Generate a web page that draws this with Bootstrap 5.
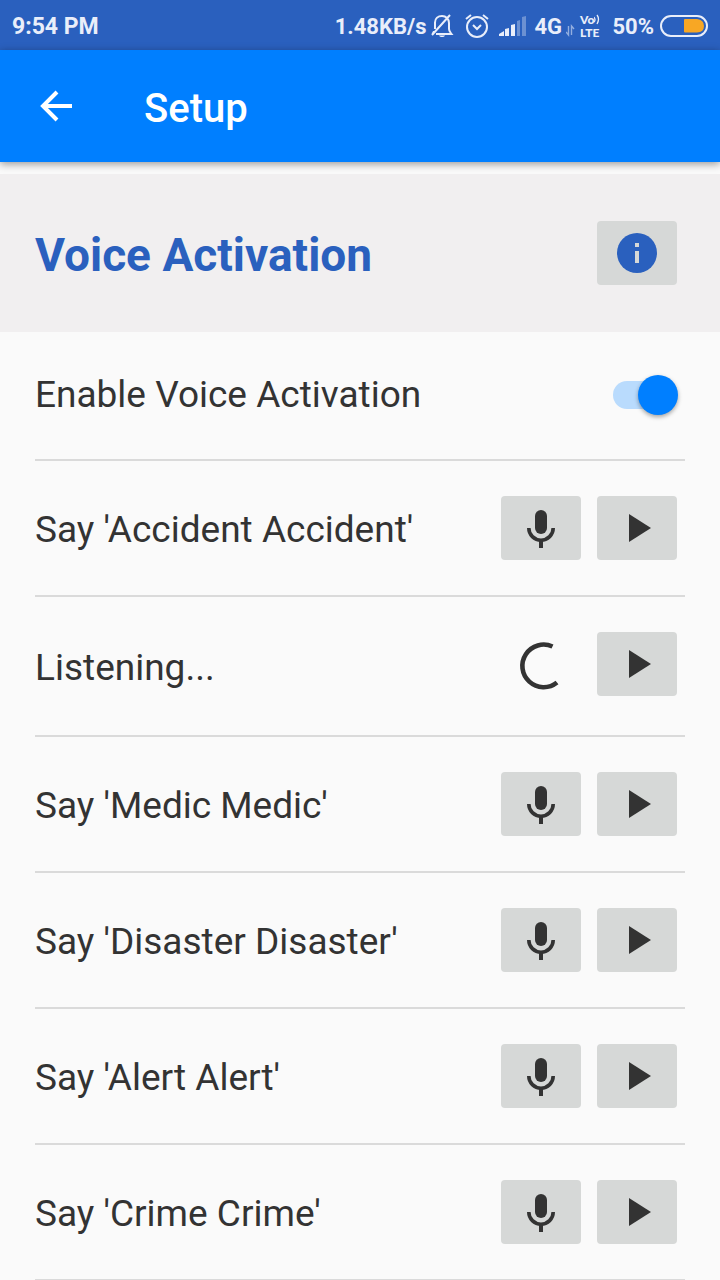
<!DOCTYPE html>
<html lang="en">
<head>
<meta charset="utf-8">
<meta name="viewport" content="width=device-width, initial-scale=1">
<title>Setup</title>
<link href="https://cdn.jsdelivr.net/npm/bootstrap@5.3.0/dist/css/bootstrap.min.css" rel="stylesheet">
<style>
  body { font-family: Roboto, "Liberation Sans", sans-serif; background: #fafafa; color: #333; }
  svg { display: block; flex: none; }
  .screen-body { scrollbar-width: none; }

  /* system status bar */
  .status-bar { height: 50px; padding: 2px 12px 0; background: #2a60be; color: #e9eefa; font-size: 22px; font-weight: 700; line-height: 28px; }
  .status-bar > span { padding-top: 2px; }
  .clock { font-size: 23px; }
  .status-bar > .volte { padding-top: 0; font-family: Lato, sans-serif; font-size: 12px; font-weight: 900; line-height: 13px; }
  .alarm { margin-left: 10px; }
  .battery { margin-left: 6px; }

  /* title bar */
  .app-bar { height: 112px; padding: 0 32px; background: #007fff; color: #fff; box-shadow: 0 2px 8px rgba(0, 0, 0, .4); z-index: 1; }
  .app-bar h1 { margin: 6px 0 0 64px; font-size: 40px; font-weight: 500; line-height: 48px; }

  .section-head { margin-top: 12px; padding: 47px 43px 47px 35px; background: #f1eff0; }
  .section-head h2 { padding-top: 4px; font-size: 46px; font-weight: 700; line-height: 56px; color: #2a60be; }

  .options { padding: 0 35px; }
  .option { min-height: 136px; padding: 0 8px 0 0; border-bottom: 2px solid #dadada; font-size: 37px; line-height: 48px; }
  .option > span:first-child { padding-top: 3px; }
  .option-switch { min-height: 129px; padding: 0 7px 2px 0; }
  .option-busy { min-height: 140px; }

  .key { width: 80px; height: 64px; border-radius: 4px; background: #d6d8d7; color: #333; }
  .key:hover, .key:active { background: #c9cbca !important; }

  /* toggle */
  .toggle { width: 65px; height: 40px; }
  .toggle input { appearance: none; width: 100%; height: 100%; margin: 0; cursor: pointer; display: flex; align-items: center; }
  .toggle input::before { content: ""; width: 56px; height: 28px; border-radius: 14px; background: #b9dbfd; }
  .toggle input::after { content: ""; width: 40px; height: 40px; margin-left: -31px; border-radius: 50%; background: #007fff; box-shadow: 0 2px 4px rgba(0, 0, 0, .35); }
  .toggle input:not(:checked)::before { background: #c4c4c4; }
  .toggle input:not(:checked)::after { margin-left: -56px; background: #f1f1f1; }
</style>
</head>
<body>
<svg width="0" height="0" class="position-absolute" aria-hidden="true">
  <symbol id="mic" viewBox="0 0 48 48">
    <rect x="18" y="6" width="12" height="24" rx="6" fill="currentColor"/>
    <path d="M11.800 24a12.200 12.200 0 0 0 24.400 0" fill="none" stroke="currentColor" stroke-width="3.600"/>
    <path d="M24 36v8" stroke="currentColor" stroke-width="4"/>
  </symbol>
  <symbol id="play" viewBox="0 0 48 48"><path d="M16 10v28l22-14z" fill="currentColor"/></symbol>
</svg>

<div class="vh-100 d-flex flex-column overflow-hidden">
  <div class="status-bar d-flex flex-shrink-0 align-items-center">
    <span class="clock me-auto">9:54 PM</span>
    <span class="me-1">1.48KB/s</span>
    <svg width="24" height="26" viewBox="0 0 24 26" fill="none" stroke="#e9eefa" stroke-width="2" aria-label="Muted">
      <path d="M5 16V9.500C5 5.500 8 3 12 3s7 3 7 7V16c0 2 1 3 2.500 5H6M2 22 20 2M4 18c0 1-1 2-1.500 3"/>
      <path d="M9 22.500h6c-1 2-5 2-6 0z" fill="#e9eefa" stroke="none"/>
    </svg>
    <svg class="alarm" width="26" height="26" viewBox="0 0 26 26" fill="none" stroke="#e9eefa" stroke-width="2" aria-label="Alarm">
      <circle cx="13" cy="14" r="10"/><path d="M9 12l4 4 4-4M2 6l5-4M24 6l-5-4"/>
    </svg>
    <svg class="ms-2" width="28" height="22" viewBox="0 0 28 22" fill="#e9eefa" aria-label="Signal">
      <path d="M1 21v-2l5-3v5zM7 14l4-1v8H7zM13 10l4-1v12h-4z"/><path d="M19 6l3-1v16h-3zM24 2l4-1v20h-4z" opacity=".35"/>
    </svg>
    <span class="ms-1 ps-1">4G</span>
    <svg class="ms-1" width="10" height="26" viewBox="0 0 10 26" fill="none" stroke="#e9eefa" stroke-width="1.400" opacity=".55" aria-hidden="true">
      <path d="M2.500 13v9L0 19M5.500 22v-9L8 16"/>
    </svg>
    <span class="volte ms-1 d-flex flex-column">
      <span class="d-flex">Vo<svg width="6" height="12" viewBox="0 0 6 12" fill="none" stroke="#e9eefa" stroke-width="1.300" aria-hidden="true"><path d="M0 4q2 3 0 5M3 2q3 4 0 9"/></svg></span>
      <span>LTE</span>
    </span>
    <span class="ms-2 ps-1">50%</span>
    <svg class="battery" width="48" height="22" viewBox="0 0 48 22" aria-label="Battery">
      <rect x="1" y="1" width="46" height="20" rx="10" fill="none" stroke="#e9eefa" stroke-width="2"/>
      <path d="M24 5q0-1 1-1h12q7 1 7 7t-7 6.500H25q-1 0-1-1z" fill="#f8a724"/>
    </svg>
  </div>

  <header class="app-bar d-flex flex-shrink-0 align-items-center">
    <button type="button" class="btn p-0 border-0 text-white" aria-label="Back">
      <svg width="48" height="48" viewBox="0 0 48 48" fill="none" stroke="currentColor" stroke-width="4"><path d="M40 24H11M25 10 11 24l14 14"/></svg>
    </button>
    <h1>Setup</h1>
  </header>

  <main class="screen-body flex-grow-1 overflow-auto">
    <div class="section-head d-flex align-items-center justify-content-between">
      <h2 class="mb-0">Voice Activation</h2>
      <button type="button" class="key btn p-0 border-0 d-flex align-items-center justify-content-center" aria-label="Information">
        <svg width="40" height="40" viewBox="0 0 40 40"><circle cx="20" cy="20" r="20" fill="#2a60be"/><path d="M18 10h4v4h-4zM18 18h4v12h-4z" fill="#d6d8d7"/></svg>
      </button>
    </div>

    <div class="options">
      <div class="option option-switch d-flex align-items-center justify-content-between">
        <label for="enable">Enable Voice Activation</label>
        <span class="toggle"><input type="checkbox" role="switch" id="enable" checked></span>
      </div>
      <div class="option d-flex align-items-center gap-3">
        <span class="me-auto">Say 'Accident Accident'</span>
        <button type="button" class="key btn p-0 border-0 d-flex align-items-center justify-content-center" aria-label="Record"><svg width="48" height="48"><use href="#mic"/></svg></button>
        <button type="button" class="key btn p-0 border-0 d-flex align-items-center justify-content-center" aria-label="Play"><svg width="48" height="48"><use href="#play"/></svg></button>
      </div>
      <div class="option option-busy d-flex align-items-center gap-3">
        <span class="me-auto">Listening...</span>
        <svg width="80" height="68" viewBox="0 0 80 68" fill="none" stroke="#333" stroke-width="4.600" role="status" aria-label="Listening"><path d="M51.500 14.500A21.300 21.300 0 1 0 56 50.500"/></svg>
        <button type="button" class="key btn p-0 border-0 mb-1 d-flex align-items-center justify-content-center" aria-label="Play"><svg width="48" height="48"><use href="#play"/></svg></button>
      </div>
      <div class="option d-flex align-items-center gap-3">
        <span class="me-auto">Say 'Medic Medic'</span>
        <button type="button" class="key btn p-0 border-0 d-flex align-items-center justify-content-center" aria-label="Record"><svg width="48" height="48"><use href="#mic"/></svg></button>
        <button type="button" class="key btn p-0 border-0 d-flex align-items-center justify-content-center" aria-label="Play"><svg width="48" height="48"><use href="#play"/></svg></button>
      </div>
      <div class="option d-flex align-items-center gap-3">
        <span class="me-auto">Say 'Disaster Disaster'</span>
        <button type="button" class="key btn p-0 border-0 d-flex align-items-center justify-content-center" aria-label="Record"><svg width="48" height="48"><use href="#mic"/></svg></button>
        <button type="button" class="key btn p-0 border-0 d-flex align-items-center justify-content-center" aria-label="Play"><svg width="48" height="48"><use href="#play"/></svg></button>
      </div>
      <div class="option d-flex align-items-center gap-3">
        <span class="me-auto">Say 'Alert Alert'</span>
        <button type="button" class="key btn p-0 border-0 d-flex align-items-center justify-content-center" aria-label="Record"><svg width="48" height="48"><use href="#mic"/></svg></button>
        <button type="button" class="key btn p-0 border-0 d-flex align-items-center justify-content-center" aria-label="Play"><svg width="48" height="48"><use href="#play"/></svg></button>
      </div>
      <div class="option d-flex align-items-center gap-3">
        <span class="me-auto">Say 'Crime Crime'</span>
        <button type="button" class="key btn p-0 border-0 d-flex align-items-center justify-content-center" aria-label="Record"><svg width="48" height="48"><use href="#mic"/></svg></button>
        <button type="button" class="key btn p-0 border-0 d-flex align-items-center justify-content-center" aria-label="Play"><svg width="48" height="48"><use href="#play"/></svg></button>
      </div>
    </div>
  </main>
</div>
<script src="https://cdn.jsdelivr.net/npm/bootstrap@5.3.0/dist/js/bootstrap.bundle.min.js"></script>
</body>
</html>
